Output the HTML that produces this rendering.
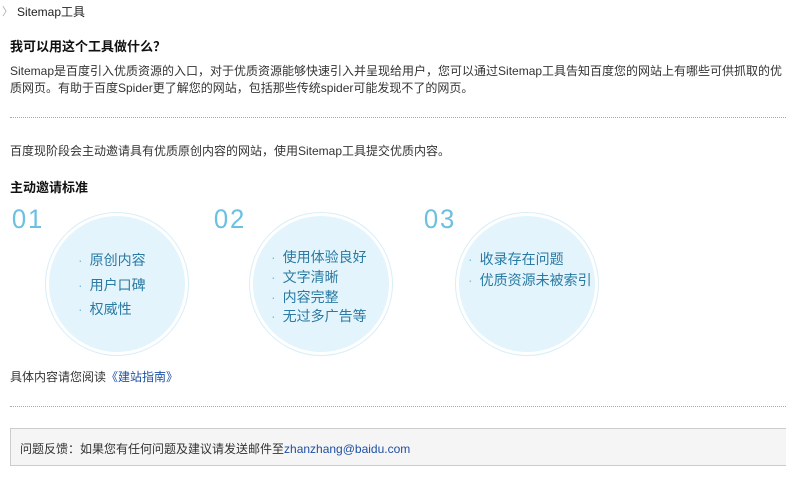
<!DOCTYPE html>
<html><head><meta charset="utf-8"><style>
body{margin:0;width:786px;height:492px;background:#fff;position:relative;overflow:hidden;font-family:"Liberation Sans","Noto Sans CJK SC",sans-serif;font-size:12px;color:#333}
.a{position:absolute;white-space:nowrap}
.dot{position:absolute;left:10px;width:776px;border-top:1px dotted #aaa;height:1px}
.c{position:absolute;width:142px;height:142px;border-radius:50%;border:1px solid #d8eef7;background:#fff}
.c i{position:absolute;left:3px;top:3px;width:136px;height:136px;border-radius:50%;background:#e3f4fc}
.n{position:absolute;font-size:27px;color:#6cc0e2;font-weight:normal;letter-spacing:2px;transform:scaleX(.95)}
.li{position:absolute;font-size:14px;color:#2a7aa3;white-space:nowrap}
.li b{font-weight:normal;color:#7bbfdc;margin-right:7px}
a{color:#1e50a2;text-decoration:none}
</style></head><body>
<div class="a" style="left:2px;top:3px;color:#aaa;font-size:11px">〉</div>
<div class="a" style="left:17px;top:3px;font-size:12px;color:#222">Sitemap工具</div>
<div class="a" style="left:10px;top:36px;font-size:13px;font-weight:bold;color:#111">我可以用这个工具做什么？</div>
<div class="a" style="left:10px;top:63px;line-height:17px">Sitemap是百度引入优质资源的入口，对于优质资源能够快速引入并呈现给用户，您可以通过Sitemap工具告知百度您的网站上有哪些可供抓取的优<br>质网页。有助于百度Spider更了解您的网站，包括那些传统spider可能发现不了的网页。</div>
<div class="dot" style="top:117px"></div>
<div class="a" style="left:10px;top:142px">百度现阶段会主动邀请具有优质原创内容的网站，使用Sitemap工具提交优质内容。</div>
<div class="a" style="left:10px;top:177px;font-size:13px;font-weight:bold;color:#111">主动邀请标准</div>

<div class="n" style="left:11px;top:204px">01</div>
<div class="n" style="left:213px;top:204px">02</div>
<div class="n" style="left:423px;top:204px">03</div>
<div class="c" style="left:45px;top:212px"><i></i></div>
<div class="c" style="left:249px;top:212px"><i></i></div>
<div class="c" style="left:455px;top:212px"><i></i></div>

<div class="li" style="left:78px;top:250px"><b>·</b>原创内容</div>
<div class="li" style="left:78px;top:275px"><b>·</b>用户口碑</div>
<div class="li" style="left:78px;top:299px"><b>·</b>权威性</div>

<div class="li" style="left:271px;top:247px"><b>·</b>使用体验良好</div>
<div class="li" style="left:271px;top:267px"><b>·</b>文字清晰</div>
<div class="li" style="left:271px;top:287px"><b>·</b>内容完整</div>
<div class="li" style="left:271px;top:306px"><b>·</b>无过多广告等</div>

<div class="li" style="left:468px;top:249px"><b>·</b>收录存在问题</div>
<div class="li" style="left:468px;top:270px"><b>·</b>优质资源未被索引</div>

<div class="a" style="left:10px;top:368px">具体内容请您阅读<a>《建站指南》</a></div>
<div class="dot" style="top:406px"></div>
<div class="a" style="left:10px;top:428px;width:776px;height:38px;background:#f5f5f5;border:1px solid #ccc;border-right:none;box-sizing:border-box"></div>
<div class="a" style="left:20px;top:440px">问题反馈：如果您有任何问题及建议请发送邮件至<a>zhanzhang@baidu.com</a></div>
</body></html>
